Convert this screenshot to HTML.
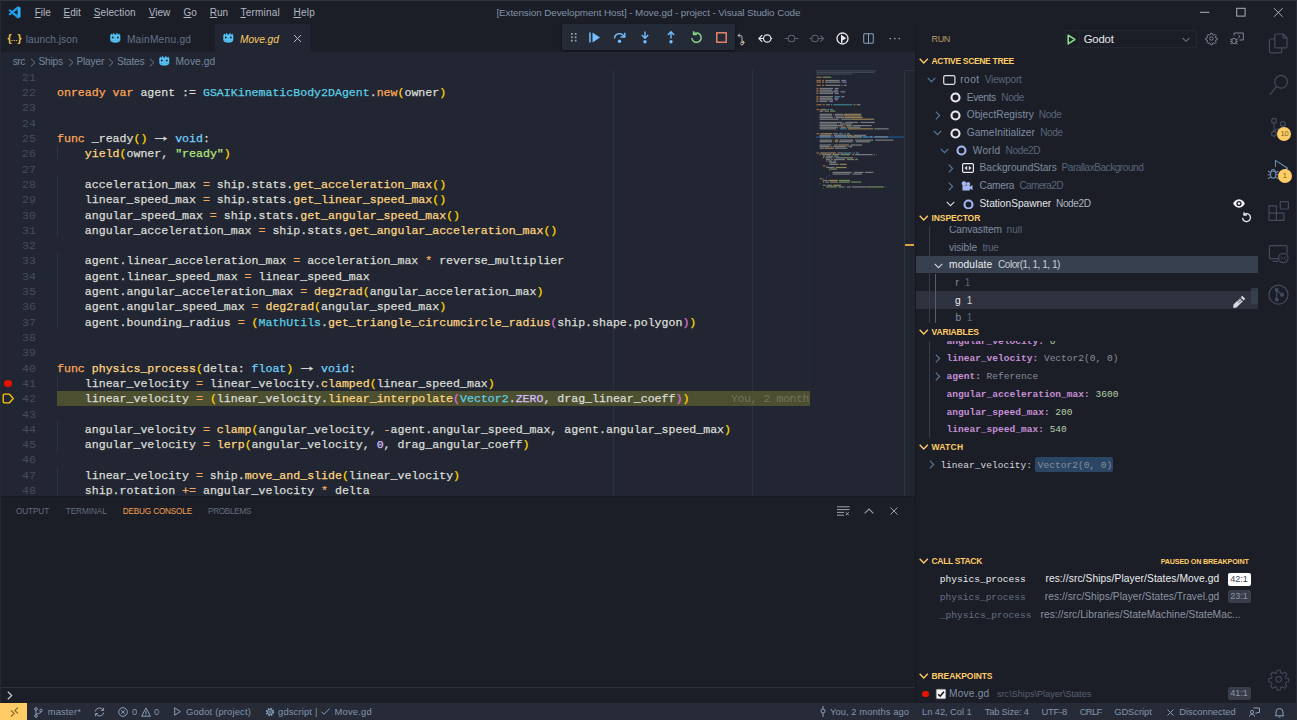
<!DOCTYPE html>
<html lang="en">
<head>
<meta charset="utf-8">
<title>[Extension Development Host] - Move.gd - project - Visual Studio Code</title>
<style>
html,body{margin:0;padding:0;background:#1b1e27;}
body{width:1297px;height:720px;position:relative;overflow:hidden;font-family:"Liberation Sans",sans-serif;font-size:10.5px;color:#cbccc6;-webkit-font-smoothing:antialiased}
.a{position:absolute;white-space:nowrap}
svg{position:absolute;overflow:visible}
#title{left:0;top:0;width:1297px;height:24px;background:#1b1e27}
#tabs{left:0;top:24px;width:915px;height:28px;background:#1b1e27}
#crumbs{left:0;top:52px;width:915px;height:18px;background:#212632}
#editor{left:0;top:70px;width:915px;height:426px;background:#212632;overflow:hidden}
#panel{left:0;top:496px;width:915px;height:207px;background:#1b1e27}
#side{left:915px;top:24px;width:343px;height:679px;background:#1b1e27;overflow:hidden}
#act{left:1258px;top:24px;width:39px;height:679px;background:#1b1e27}
#status{left:0;top:703px;width:1297px;height:17px;background:#262b37;color:#8395ad;font-size:10.5px;line-height:17px}
/* code */
.ln{margin-top:.7px;position:absolute;left:0;width:36px;text-align:right;color:#454c5e;font-family:"Liberation Mono",monospace;font-size:11.58px;height:15.31px;line-height:15.31px}
.cl{margin-top:.7px;position:absolute;left:57px;max-width:753px;overflow:hidden;white-space:pre;font-family:"Liberation Mono",monospace;font-size:11.58px;height:15.31px;line-height:15.31px;color:#dcddd7;-webkit-text-stroke:.25px currentColor}
.k{color:#ffa759}.f{color:#ffd580}.t{color:#5ccfe6}.v{color:#73d0ff}.s{color:#bae67e}.o{color:#f5a85c}.n{color:#d4bfff}
.b1{color:#ffd700}.b2{color:#da70d6}
.ar{display:inline-block;width:13.9px;text-align:center;transform:translateY(-1.5px) scale(1.7,1.25)}
.gd{left:57px;width:1px;background:#2c3241}
.rul{top:0;width:1px;height:426px;background:#2b3140}
.bl{letter-spacing:-.45px;color:#70735f;-webkit-text-stroke:0}
#mini rect{height:1.25px}#mini rect.hl{height:1.7px}#mini g{opacity:.5}
#ovr{border-left:1px solid #2d3340;border-top:1px solid #2d3340;box-sizing:border-box;background:#20252f}
.mn{top:0;line-height:25px;color:#b3b8c3;font-size:10px}
.mn u{text-decoration-thickness:.8px;text-underline-offset:.8px}
.tb{top:0;line-height:32.2px;font-size:10.2px;color:#65738a}
.cr{top:0;line-height:20.5px;font-size:10.2px;color:#76869d}
.cs{font-size:11px;transform:scaleX(.75);transform-origin:0 50%;color:#6a7386}
.hd{width:343px;height:17.700px;background:#1b1e27}
.ht{top:0;line-height:18.300px;font-size:8.500px;font-weight:bold;color:#ffcc66}
.tl{font-size:10.200px;line-height:18.500px;color:#7f8da2}
.td{font-size:10.100px;line-height:18.500px;color:#58657a}
.mono{font-family:"Liberation Mono",monospace;font-size:9.550px;line-height:19.700px}
.vn{color:#c58fd6;font-weight:bold}.wn{color:#d6d9df}
.vn span,.wn span{font-weight:normal}
.vval{color:#868e9c}.vnum{color:#b5cea8}
.bdg{font-size:9px;line-height:13px;height:13px;width:23px;text-align:center;border-radius:2px}
.pt{top:7px;line-height:16px;font-size:8.200px;color:#646d80}
#panel{border-top:1px solid #171a22;box-sizing:border-box}
.st{top:0;line-height:17.500px;font-size:9.400px;color:#8395ad}
.bb{width:14px;height:14px;border-radius:50%;background:#ffcc66;color:#7a6128;font-size:7.500px;line-height:14px;text-align:center;letter-spacing:-.3px}
</style>
</head>
<body>
<div id="title" class="a">
<svg style="left:8px;top:5.800px" width="13" height="12.600" viewBox="0 0 100 100"><path fill="#1f9cf0" d="M74 1v29L13 75 2 65z"/><path fill="#1f9cf0" d="M74 99V70L13 25 2 35z"/><path fill="#2eb0f6" d="M74 1l24 11.500v75L74 99V70l-2-1.500V31.500L74 30z"/><path fill="#1b1e27" d="M74 31v38L46 50z"/></svg>
<span class="a mn" style="left:34.7px"><u>F</u>ile</span>
<span class="a mn" style="left:63.6px"><u>E</u>dit</span>
<span class="a mn" style="left:93.7px;letter-spacing:.1px"><u>S</u>election</span>
<span class="a mn" style="left:148.8px"><u>V</u>iew</span>
<span class="a mn" style="left:183.5px"><u>G</u>o</span>
<span class="a mn" style="left:209.8px"><u>R</u>un</span>
<span class="a mn" style="left:240.5px;letter-spacing:.2px"><u>T</u>erminal</span>
<span class="a mn" style="left:293.5px;letter-spacing:.25px"><u>H</u>elp</span>
<span class="a" id="wt" style="left:496.4px;top:0;line-height:25px;color:#8292a8;font-size:9.900px;letter-spacing:-0.094px/*fit*/">[Extension Development Host] - Move.gd - project - Visual Studio Code</span>
<svg style="left:1198px;top:6px" width="90" height="13" viewBox="0 0 90 13" fill="none" stroke="#aab0bc" stroke-width="1"><path d="M2 6.3h9.4"/><rect x="38.7" y="2.3" width="8.4" height="7.8"/><path d="M76 2.2l8.6 8.6M84.6 2.2l-8.6 8.6"/></svg>
</div>
<div id="tabs" class="a">
<span class="a" style="left:7.5px;top:0;line-height:29px;font-size:10.5px;font-weight:bold;color:#f5c84c;letter-spacing:-.9px">{<span style="font-size:7px;position:relative;top:-1.5px;letter-spacing:-.2px">…</span>}</span>
<span class="a tb" style="left:25.8px;letter-spacing:0.023px/*fit*/">launch.json</span>
<svg style="left:109.3px;top:8.3px" width="12.600" height="11.500" viewBox="0 0 12 11"><path fill="#58c2f4" stroke="#141a22" stroke-width=".5" d="M.9 3.300 2.100 1.300l1.400 1 .2-1.700 1.500.3.200 1.200h1.200l.2-1.200 1.500-.3.200 1.700 1.400-1L11.100 3.300v4.200c0 2-2 3-5.100 3S.9 9.500.9 7.500z"/><circle cx="3.600" cy="5.300" r=".9" fill="#13202c"/><circle cx="8.400" cy="5.300" r=".9" fill="#13202c"/><circle cx="6" cy="6" r=".4" fill="#3a8fba"/><path d="M1.500 7.800c1.500.9 3 .3 4.500 1 1.500-.7 3-.1 4.500-1" fill="none" stroke="#3f9fcf" stroke-width=".5"/></svg>
<span class="a tb" style="left:126.9px;letter-spacing:0.233px/*fit*/">MainMenu.gd</span>
<div class="a" style="left:214.500px;top:0;width:95.500px;height:28px;background:#212632"></div>
<svg style="left:222.3px;top:8.3px" width="12.600" height="11.500" viewBox="0 0 12 11"><path fill="#58c2f4" stroke="#141a22" stroke-width=".5" d="M.9 3.300 2.100 1.300l1.400 1 .2-1.700 1.500.3.200 1.200h1.200l.2-1.200 1.500-.3.200 1.700 1.400-1L11.100 3.300v4.200c0 2-2 3-5.100 3S.9 9.500.9 7.500z"/><circle cx="3.600" cy="5.300" r=".9" fill="#13202c"/><circle cx="8.400" cy="5.300" r=".9" fill="#13202c"/><circle cx="6" cy="6" r=".4" fill="#3a8fba"/><path d="M1.500 7.800c1.500.9 3 .3 4.500 1 1.500-.7 3-.1 4.500-1" fill="none" stroke="#3f9fcf" stroke-width=".5"/></svg>
<span class="a tb" style="left:240px;color:#ffcc66;font-style:italic;letter-spacing:-0.025px/*fit*/">Move.gd</span>
<svg style="left:293px;top:10px" width="9" height="9" viewBox="0 0 9 9" stroke="#b3b8c3" stroke-width="1" fill="none"><path d="M1 1l7 7M8 1l-7 7"/></svg>
</div>
<div class="a" id="dbg" style="left:561.5px;top:24.3px;width:173.600px;height:25.700px;background:#252a37;box-shadow:0 1px 3px rgba(0,0,0,.45)">
<svg style="left:9.500px;top:8.500px" width="6" height="9" viewBox="0 0 6 9" fill="#9ba2af"><rect x="0" y="0" width="1.700" height="1.700"/><rect x="3.800" y="0" width="1.700" height="1.700"/><rect x="0" y="3.400" width="1.700" height="1.700"/><rect x="3.800" y="3.400" width="1.700" height="1.700"/><rect x="0" y="6.800" width="1.700" height="1.700"/><rect x="3.800" y="6.800" width="1.700" height="1.700"/></svg>
<svg style="left:26px;top:6.500px" width="13" height="13" viewBox="0 0 13 13"><rect x="1.200" y="1.500" width="1.500" height="10" fill="#75beff"/><path d="M4.500 1.500l7.500 5-7.500 5z" fill="#75beff"/></svg>
<svg style="left:51px;top:6.500px" width="14" height="13" viewBox="0 0 14 13" fill="none" stroke="#75beff" stroke-width="1.400"><path d="M1.500 7.500a5 5 0 0 1 9.600-1.800"/><path d="M11.800 1.800v4.200H7.600" stroke-linejoin="miter"/><circle cx="6.500" cy="10.300" r="1.700" fill="#75beff" stroke="none"/></svg>
<svg style="left:77.500px;top:6px" width="12" height="14" viewBox="0 0 12 14" fill="none" stroke="#75beff" stroke-width="1.400"><path d="M6 1.500v6.500M2.800 5 6 8.200 9.200 5"/><circle cx="6" cy="11.800" r="1.700" fill="#75beff" stroke="none"/></svg>
<svg style="left:103px;top:6px" width="12" height="14" viewBox="0 0 12 14" fill="none" stroke="#75beff" stroke-width="1.400"><path d="M6 8.500V2M2.800 5 6 1.800 9.200 5"/><circle cx="6" cy="11.800" r="1.700" fill="#75beff" stroke="none"/></svg>
<svg style="left:128.500px;top:6.500px" width="13" height="13" viewBox="0 0 13 13" fill="none" stroke="#89d185" stroke-width="1.500"><path d="M3.300 3.200A4.700 4.700 0 1 1 1.800 7"/><path d="M3.600 .3v3.300h3.300"/></svg>
<svg style="left:154.500px;top:7.500px" width="11" height="11" viewBox="0 0 11 11" fill="none" stroke="#f48771" stroke-width="1.400"><rect x=".8" y=".8" width="9.400" height="9.400"/></svg>
</div>
<svg style="left:735px;top:31.500px" width="12" height="14" viewBox="0 0 12 14" fill="none" stroke="#aeb5c2" stroke-width="1"><path d="M3 3.500h2.500q1.500 0 1.500 1.500v5M5 1.500l-2 2 2 2"/><circle cx="7" cy="11.500" r="1.400"/><path d="M9 10.500H6.500M7.500 8.500l2 2-2 2" stroke="#c9b27a"/></svg>
<svg style="left:758px;top:32.800px" width="15" height="11" viewBox="0 0 15 11" fill="none" stroke="#e2e5ea" stroke-width="1.200"><circle cx="9.200" cy="5.500" r="3.700"/><path d="M5.500 5.500H1M4.200 2.200L.9 5.500l3.300 3.300M12.900 5.500h1.300"/></svg>
<svg style="left:783.500px;top:32.800px" width="15" height="11" viewBox="0 0 15 11" fill="none" stroke="#586072" stroke-width="1.100"><circle cx="7.500" cy="5.500" r="3.300"/><path d="M4.200 5.500H.5M10.800 5.500h3.700"/></svg>
<svg style="left:809px;top:32.800px" width="15" height="11" viewBox="0 0 15 11" fill="none" stroke="#586072" stroke-width="1.100"><circle cx="6" cy="5.500" r="3.300"/><path d="M9.300 5.500h4.900M11.500 2.500l3 3-3 3M2.700 5.500H.5"/></svg>
<svg style="left:835.500px;top:32px" width="13" height="13" viewBox="0 0 13 13"><circle cx="6.500" cy="6.500" r="5.500" fill="none" stroke="#e6e8ec" stroke-width="1.300"/><path d="M5 2.200v8.600h1.500V8.600L10.300 6.300 6 3.200z" fill="#e6e8ec"/></svg>
<svg style="left:863px;top:33px" width="11" height="11" viewBox="0 0 12 12" fill="none" stroke="#8aa3c4" stroke-width="1.100"><rect x=".8" y=".8" width="10.400" height="10.400" rx="1"/><path d="M6 .8v10.400"/></svg>
<svg style="left:888.500px;top:37.300px" width="12" height="3" viewBox="0 0 12 3" fill="#8aa3c4"><circle cx="1.300" cy="1.500" r=".85"/><circle cx="5.800" cy="1.500" r=".85"/><circle cx="10.300" cy="1.500" r=".85"/></svg>
<div id="crumbs" class="a">
<span class="a cr" style="left:12.7px;letter-spacing:-0.465px/*fit*/">src</span><svg style="left:29.5px;top:5.5px" width="6" height="9" viewBox="0 0 6 9" fill="none" stroke="#6f788a" stroke-width="1"><path d="M1 .8l4 3.700-4 3.700"/></svg>
<span class="a cr" style="left:38.4px;letter-spacing:-0.197px/*fit*/">Ships</span><svg style="left:67.5px;top:5.5px" width="6" height="9" viewBox="0 0 6 9" fill="none" stroke="#6f788a" stroke-width="1"><path d="M1 .8l4 3.700-4 3.700"/></svg>
<span class="a cr" style="left:76.4px;letter-spacing:-0.182px/*fit*/">Player</span><svg style="left:108.3px;top:5.5px" width="6" height="9" viewBox="0 0 6 9" fill="none" stroke="#6f788a" stroke-width="1"><path d="M1 .8l4 3.700-4 3.700"/></svg>
<span class="a cr" style="left:117px;letter-spacing:-0.282px/*fit*/">States</span><svg style="left:148.6px;top:5.5px" width="6" height="9" viewBox="0 0 6 9" fill="none" stroke="#6f788a" stroke-width="1"><path d="M1 .8l4 3.700-4 3.700"/></svg>
<svg style="left:158.3px;top:3.3px" width="12.600" height="11.500" viewBox="0 0 12 11"><path fill="#58c2f4" stroke="#141a22" stroke-width=".5" d="M.9 3.300 2.100 1.300l1.400 1 .2-1.700 1.500.3.200 1.200h1.200l.2-1.200 1.500-.3.200 1.700 1.400-1L11.100 3.300v4.200c0 2-2 3-5.100 3S.9 9.500.9 7.500z"/><circle cx="3.600" cy="5.300" r=".9" fill="#13202c"/><circle cx="8.400" cy="5.300" r=".9" fill="#13202c"/><circle cx="6" cy="6" r=".4" fill="#3a8fba"/><path d="M1.500 7.800c1.500.9 3 .3 4.500 1 1.500-.7 3-.1 4.500-1" fill="none" stroke="#3f9fcf" stroke-width=".5"/></svg>
<span class="a cr" style="left:175.500px;letter-spacing:0.117px/*fit*/">Move.gd</span>
</div>
<div id="editor" class="a">
<div class="a rul" style="left:613px"></div><div class="a rul" style="left:752px"></div>
<div class="a" id="hl42" style="left:57px;top:321.16px;width:753px;height:15.3px;background:#4c4f30"></div>
<div class="a gd" style="top:75.60px;height:15.31px"></div><div class="a gd" style="top:106.22px;height:61.24px"></div><div class="a gd" style="top:182.77px;height:76.55px"></div><div class="a gd" style="top:305.25px;height:15.91px"></div><div class="a gd" style="top:351.18px;height:30.62px"></div><div class="a gd" style="top:397.11px;height:30.62px"></div>
<div class="ln" style="top:-0.95px">21</div>
<div class="ln" style="top:14.36px">22</div>
<div class="cl" style="top:14.36px"><span class="k">onready</span> <span class="k">var</span> agent := <span class="t">GSAIKinematicBody2DAgent</span>.<span class="k">new</span><span class="b1">(</span>owner<span class="b1">)</span></div>
<div class="ln" style="top:29.67px">23</div>
<div class="ln" style="top:44.98px">24</div>
<div class="ln" style="top:60.29px">25</div>
<div class="cl" style="top:60.29px"><span class="k">func</span> _ready<span class="b1">()</span> <span class="ar">→</span> <span class="v">void</span>:</div>
<div class="ln" style="top:75.60px">26</div>
<div class="cl" style="top:75.60px">    <span class="f">yield</span><span class="b1">(</span>owner, <span class="s">"ready"</span><span class="b1">)</span></div>
<div class="ln" style="top:90.91px">27</div>
<div class="ln" style="top:106.22px">28</div>
<div class="cl" style="top:106.22px">    acceleration_max <span class="o">=</span> ship.stats.<span class="f">get_acceleration_max</span><span class="b1">()</span></div>
<div class="ln" style="top:121.53px">29</div>
<div class="cl" style="top:121.53px">    linear_speed_max <span class="o">=</span> ship.stats.<span class="f">get_linear_speed_max</span><span class="b1">()</span></div>
<div class="ln" style="top:136.84px">30</div>
<div class="cl" style="top:136.84px">    angular_speed_max <span class="o">=</span> ship.stats.<span class="f">get_angular_speed_max</span><span class="b1">()</span></div>
<div class="ln" style="top:152.15px">31</div>
<div class="cl" style="top:152.15px">    angular_acceleration_max <span class="o">=</span> ship.stats.<span class="f">get_angular_acceleration_max</span><span class="b1">()</span></div>
<div class="ln" style="top:167.46px">32</div>
<div class="ln" style="top:182.77px">33</div>
<div class="cl" style="top:182.77px">    agent.linear_acceleration_max <span class="o">=</span> acceleration_max <span class="o">*</span> reverse_multiplier</div>
<div class="ln" style="top:198.08px">34</div>
<div class="cl" style="top:198.08px">    agent.linear_speed_max <span class="o">=</span> linear_speed_max</div>
<div class="ln" style="top:213.39px">35</div>
<div class="cl" style="top:213.39px">    agent.angular_acceleration_max <span class="o">=</span> <span class="f">deg2rad</span><span class="b1">(</span>angular_acceleration_max<span class="b1">)</span></div>
<div class="ln" style="top:228.70px">36</div>
<div class="cl" style="top:228.70px">    agent.angular_speed_max <span class="o">=</span> <span class="f">deg2rad</span><span class="b1">(</span>angular_speed_max<span class="b1">)</span></div>
<div class="ln" style="top:244.01px">37</div>
<div class="cl" style="top:244.01px">    agent.bounding_radius <span class="o">=</span> <span class="b1">(</span><span class="t">MathUtils</span>.<span class="f">get_triangle_circumcircle_radius</span><span class="b2">(</span>ship.shape.polygon<span class="b2">)</span><span class="b1">)</span></div>
<div class="ln" style="top:259.32px">38</div>
<div class="ln" style="top:274.63px">39</div>
<div class="ln" style="top:289.94px">40</div>
<div class="cl" style="top:289.94px"><span class="k">func</span> <span class="f">physics_process</span><span class="b1">(</span>delta: <span class="v">float</span><span class="b1">)</span> <span class="ar">→</span> <span class="v">void</span>:</div>
<div class="ln" style="top:305.25px">41</div>
<div class="cl" style="top:305.25px">    linear_velocity <span class="o">=</span> linear_velocity.<span class="f">clamped</span><span class="b1">(</span>linear_speed_max<span class="b1">)</span></div>
<div class="ln" style="top:320.56px">42</div>
<div class="cl" style="top:320.56px">    linear_velocity <span class="o">=</span> <span class="b1">(</span>linear_velocity.<span class="f">linear_interpolate</span><span class="b2">(</span><span class="t">Vector2</span>.<span class="n">ZERO</span>, drag_linear_coeff<span class="b2">)</span><span class="b1">)</span>      <span class="bl">You, 2 months ago • Fix player movement</span></div>
<div class="ln" style="top:335.87px">43</div>
<div class="ln" style="top:351.18px">44</div>
<div class="cl" style="top:351.18px">    angular_velocity <span class="o">=</span> <span class="f">clamp</span><span class="b1">(</span>angular_velocity, <span class="o">-</span>agent.angular_speed_max, agent.angular_speed_max<span class="b1">)</span></div>
<div class="ln" style="top:366.49px">45</div>
<div class="cl" style="top:366.49px">    angular_velocity <span class="o">=</span> <span class="f">lerp</span><span class="b1">(</span>angular_velocity, <span class="n">0</span>, drag_angular_coeff<span class="b1">)</span></div>
<div class="ln" style="top:381.80px">46</div>
<div class="ln" style="top:397.11px">47</div>
<div class="cl" style="top:397.11px">    linear_velocity <span class="o">=</span> ship.<span class="f">move_and_slide</span><span class="b1">(</span>linear_velocity<span class="b1">)</span></div>
<div class="ln" style="top:412.42px">48</div>
<div class="cl" style="top:412.42px">    ship.rotation <span class="o">+=</span> angular_velocity <span class="o">*</span> delta</div>

<div class="a" style="left:4.2px;top:310.00px;width:7.4px;height:7.4px;border-radius:50%;background:#e51400"></div>
<svg style="left:2px;top:323.31px" width="13" height="11" viewBox="0 0 13 11"><path d="M2.2 1.2h5.2l3.9 4.3-3.9 4.3H2.2a1 1 0 0 1-1-1V2.2a1 1 0 0 1 1-1z" fill="none" stroke="#ffcc00" stroke-width="1.3" stroke-linejoin="round"/></svg>
<div class="a" id="mmshadow" style="left:809px;top:0;width:1px;height:320px;background:#262b38"></div>
<svg id="mini" style="left:816px;top:0" width="88" height="130" viewBox="0 0 88 130">
<rect class="hl" x="0" y="66.19" width="88" fill="#1f4a73"/>
<g fill="#5c6773"><rect x="0.4" y="0.2" width="59.3"/><rect x="0.4" y="1.8" width="57.7"/><rect x="0.4" y="3.4" width="35.9"/></g>
<g fill="#ffa759"><rect x="0.4" y="6.6" width="5.3"/><rect x="0.4" y="9.9" width="4.5"/><rect x="6.0" y="9.9" width="2.1"/><rect x="0.4" y="11.5" width="4.5"/><rect x="6.0" y="11.5" width="2.1"/><rect x="0.4" y="14.7" width="4.5"/><rect x="6.0" y="14.7" width="2.1"/><rect x="0.4" y="17.9" width="2.1"/><rect x="0.4" y="19.5" width="2.1"/><rect x="0.4" y="21.2" width="2.1"/><rect x="0.4" y="22.8" width="2.1"/><rect x="0.4" y="26.0" width="2.1"/><rect x="0.4" y="27.6" width="2.1"/><rect x="0.4" y="29.2" width="2.1"/><rect x="0.4" y="30.8" width="2.1"/><rect x="0.4" y="34.1" width="5.3"/><rect x="6.8" y="34.1" width="2.1"/><rect x="37.5" y="34.1" width="2.1"/><rect x="0.4" y="38.9" width="2.9"/><rect x="0.4" y="63.1" width="2.9"/><rect x="0.4" y="82.4" width="2.9"/><rect x="3.6" y="84.0" width="1.3"/><rect x="35.9" y="84.0" width="2.1"/><rect x="6.8" y="85.6" width="2.1"/><rect x="6.8" y="87.2" width="1.3"/><rect x="10.1" y="90.5" width="1.3"/><rect x="6.8" y="95.3" width="2.9"/><rect x="3.6" y="108.2" width="2.9"/><rect x="6.8" y="111.4" width="1.3"/></g>
<g fill="#bae67e"><rect x="6.8" y="6.6" width="8.5"/><rect x="14.1" y="40.5" width="5.3"/><rect x="24.6" y="84.0" width="9.3"/><rect x="31.0" y="88.9" width="6.9"/><rect x="13.3" y="98.5" width="7.7"/><rect x="23.0" y="109.8" width="10.9"/><rect x="23.0" y="111.4" width="10.9"/><rect x="35.1" y="111.4" width="6.9"/><rect x="42.3" y="111.4" width="2.9"/><rect x="10.1" y="116.3" width="10.9"/><rect x="50.4" y="116.3" width="17.4"/></g>
<g fill="#cbccc6"><rect x="9.3" y="9.9" width="14.2"/><rect x="9.3" y="11.5" width="15.0"/><rect x="9.3" y="14.7" width="15.0"/><rect x="3.6" y="17.9" width="13.4"/><rect x="3.6" y="19.5" width="12.5"/><rect x="3.6" y="21.2" width="19.0"/><rect x="3.6" y="22.8" width="13.4"/><rect x="3.6" y="26.0" width="13.4"/><rect x="3.6" y="27.6" width="12.5"/><rect x="3.6" y="29.2" width="13.4"/><rect x="3.6" y="30.8" width="7.7"/><rect x="10.1" y="34.1" width="3.7"/><rect x="14.9" y="34.1" width="1.3"/><rect x="40.7" y="34.1" width="3.7"/><rect x="4.4" y="38.9" width="6.1"/><rect x="11.7" y="38.9" width="1.3"/><rect x="8.5" y="40.5" width="4.5"/><rect x="3.6" y="43.7" width="12.5"/><rect x="18.9" y="43.7" width="8.5"/><rect x="3.6" y="45.3" width="12.5"/><rect x="18.9" y="45.3" width="8.5"/><rect x="3.6" y="46.9" width="13.4"/><rect x="19.7" y="46.9" width="8.5"/><rect x="3.6" y="48.6" width="19.0"/><rect x="25.4" y="48.6" width="8.5"/><rect x="3.6" y="51.8" width="23.0"/><rect x="29.4" y="51.8" width="12.5"/><rect x="44.7" y="51.8" width="14.2"/><rect x="3.6" y="53.4" width="17.4"/><rect x="23.8" y="53.4" width="12.5"/><rect x="3.6" y="55.0" width="23.8"/><rect x="36.7" y="55.0" width="19.0"/><rect x="3.6" y="56.6" width="18.2"/><rect x="31.0" y="56.6" width="13.4"/><rect x="3.6" y="58.2" width="16.6"/><rect x="58.4" y="58.2" width="14.2"/><rect x="17.3" y="63.1" width="4.5"/><rect x="28.6" y="63.1" width="1.3"/><rect x="3.6" y="64.7" width="11.7"/><rect x="18.1" y="64.7" width="12.5"/><rect x="37.5" y="64.7" width="12.5"/><rect x="3.6" y="66.3" width="11.7"/><rect x="18.9" y="66.3" width="12.5"/><rect x="58.4" y="66.3" width="13.4"/><rect x="3.6" y="69.5" width="12.5"/><rect x="23.8" y="69.5" width="13.4"/><rect x="39.1" y="69.5" width="18.2"/><rect x="59.2" y="69.5" width="18.2"/><rect x="3.6" y="71.1" width="12.5"/><rect x="23.0" y="71.1" width="13.4"/><rect x="39.9" y="71.1" width="14.2"/><rect x="3.6" y="74.4" width="11.7"/><rect x="18.1" y="74.4" width="3.7"/><rect x="34.3" y="74.4" width="11.7"/><rect x="3.6" y="76.0" width="10.1"/><rect x="17.3" y="76.0" width="12.5"/><rect x="32.6" y="76.0" width="3.7"/><rect x="3.6" y="77.6" width="4.5"/><rect x="18.9" y="77.6" width="12.5"/><rect x="21.4" y="82.4" width="6.1"/><rect x="37.5" y="82.4" width="1.3"/><rect x="6.0" y="84.0" width="9.3"/><rect x="39.1" y="84.0" width="17.4"/><rect x="10.1" y="85.6" width="6.9"/><rect x="9.3" y="87.2" width="6.9"/><rect x="19.7" y="87.2" width="17.4"/><rect x="10.1" y="88.9" width="3.7"/><rect x="18.1" y="88.9" width="10.9"/><rect x="39.1" y="88.9" width="2.9"/><rect x="12.5" y="90.5" width="3.7"/><rect x="17.3" y="90.5" width="2.9"/><rect x="13.3" y="92.1" width="6.9"/><rect x="13.3" y="93.7" width="9.3"/><rect x="10.9" y="95.3" width="0.5"/><rect x="10.1" y="96.9" width="8.5"/><rect x="13.3" y="100.1" width="0.5"/><rect x="16.5" y="101.8" width="19.0"/><rect x="38.3" y="101.8" width="9.3"/><rect x="48.8" y="101.8" width="8.5"/><rect x="16.5" y="103.4" width="17.4"/><rect x="36.7" y="103.4" width="9.3"/><rect x="13.3" y="105.0" width="0.5"/><rect x="10.1" y="106.6" width="0.5"/><rect x="6.8" y="108.2" width="0.5"/><rect x="6.8" y="109.8" width="4.5"/><rect x="9.3" y="111.4" width="3.7"/><rect x="3.6" y="113.0" width="0.5"/><rect x="6.8" y="114.7" width="2.9"/><rect x="10.9" y="114.7" width="5.3"/><rect x="22.2" y="116.3" width="6.1"/><rect x="31.0" y="116.3" width="3.7"/><rect x="35.9" y="116.3" width="14.2"/><rect x="69.7" y="116.3" width="0.5"/><rect x="6.8" y="117.9" width="0.5"/></g>
<g fill="#d4bfff"><rect x="25.4" y="9.9" width="4.5"/><rect x="26.2" y="11.5" width="4.5"/><rect x="27.8" y="14.7" width="2.9"/><rect x="18.9" y="17.9" width="3.7"/><rect x="18.1" y="19.5" width="3.7"/><rect x="24.6" y="21.2" width="4.5"/><rect x="18.9" y="22.8" width="3.7"/><rect x="25.4" y="26.0" width="2.9"/><rect x="18.1" y="27.6" width="4.5"/><rect x="18.9" y="29.2" width="2.9"/><rect x="13.3" y="30.8" width="3.7"/><rect x="53.6" y="66.3" width="2.9"/><rect x="37.5" y="71.1" width="0.5"/><rect x="60.0" y="84.0" width="0.5"/><rect x="39.9" y="87.2" width="0.5"/></g>
<g fill="#f29e74"><rect x="25.4" y="14.7" width="1.3"/><rect x="17.3" y="43.7" width="0.5"/><rect x="17.3" y="45.3" width="0.5"/><rect x="18.1" y="46.9" width="0.5"/><rect x="23.8" y="48.6" width="0.5"/><rect x="27.8" y="51.8" width="0.5"/><rect x="43.1" y="51.8" width="0.5"/><rect x="22.2" y="53.4" width="0.5"/><rect x="28.6" y="55.0" width="0.5"/><rect x="23.0" y="56.6" width="0.5"/><rect x="21.4" y="58.2" width="0.5"/><rect x="16.5" y="64.7" width="0.5"/><rect x="16.5" y="66.3" width="0.5"/><rect x="17.3" y="69.5" width="0.5"/><rect x="17.3" y="71.1" width="0.5"/><rect x="16.5" y="74.4" width="0.5"/><rect x="14.9" y="76.0" width="1.3"/><rect x="31.0" y="76.0" width="0.5"/><rect x="57.6" y="84.0" width="1.3"/><rect x="17.3" y="87.2" width="1.3"/><rect x="38.3" y="87.2" width="0.5"/><rect x="14.9" y="88.9" width="2.1"/><rect x="36.7" y="101.8" width="0.5"/><rect x="35.1" y="103.4" width="0.5"/><rect x="29.4" y="116.3" width="0.5"/></g>
<g fill="#5ccfe6"><rect x="18.9" y="26.0" width="5.3"/><rect x="17.3" y="34.1" width="19.0"/><rect x="23.8" y="58.2" width="6.9"/><rect x="47.1" y="66.3" width="5.3"/></g>
<g fill="#73d0ff"><rect x="14.1" y="38.9" width="2.9"/><rect x="23.0" y="63.1" width="3.7"/><rect x="31.0" y="63.1" width="2.9"/><rect x="27.8" y="82.4" width="7.7"/><rect x="39.9" y="82.4" width="2.9"/><rect x="18.1" y="85.6" width="4.5"/></g>
<g fill="#ffd580"><rect x="3.6" y="40.5" width="3.7"/><rect x="27.8" y="43.7" width="17.4"/><rect x="27.8" y="45.3" width="17.4"/><rect x="28.6" y="46.9" width="18.2"/><rect x="34.3" y="48.6" width="23.8"/><rect x="30.2" y="55.0" width="5.3"/><rect x="24.6" y="56.6" width="5.3"/><rect x="31.8" y="58.2" width="25.4"/><rect x="4.4" y="63.1" width="11.7"/><rect x="31.0" y="64.7" width="5.3"/><rect x="31.8" y="66.3" width="14.2"/><rect x="18.9" y="69.5" width="3.7"/><rect x="18.9" y="71.1" width="2.9"/><rect x="22.2" y="74.4" width="10.9"/><rect x="8.5" y="77.6" width="9.3"/><rect x="4.4" y="82.4" width="15.8"/><rect x="16.5" y="84.0" width="6.9"/><rect x="23.8" y="93.7" width="6.9"/><rect x="19.7" y="96.9" width="10.9"/><rect x="12.5" y="109.8" width="9.3"/><rect x="14.1" y="111.4" width="7.7"/><rect x="17.3" y="114.7" width="7.7"/></g>
</svg>

<div class="a" id="ovr" style="left:904px;top:0;width:11px;height:426px"></div>
<div class="a" style="left:905px;top:174px;width:9px;height:2px;background:#d9a441"></div>
</div>
<div id="panel" class="a">
<span class="a pt" style="left:16px;letter-spacing:-0.095px/*fit*/">OUTPUT</span>
<span class="a pt" style="left:65.700px;letter-spacing:-0.038px/*fit*/">TERMINAL</span>
<span class="a pt" style="left:122.800px;color:#f5a04c;letter-spacing:-0.172px/*fit*/">DEBUG CONSOLE</span>
<span class="a pt" style="left:208px;letter-spacing:-0.300px/*fit*/">PROBLEMS</span>
<svg style="left:836.500px;top:9px" width="13" height="10" viewBox="0 0 13 10" fill="none" stroke="#9aa1ae" stroke-width="1"><path d="M0 .8h12.500M0 3.600h12.500M0 6.400h7M0 9.200h7M8.800 6.200l3 3M11.800 6.200l-3 3"/></svg>
<svg style="left:863.500px;top:11px" width="10" height="6" viewBox="0 0 10 6" fill="none" stroke="#9aa1ae" stroke-width="1.100"><path d="M.6 5.400l4.400-4.400 4.400 4.400"/></svg>
<svg style="left:890px;top:10px" width="8" height="8" viewBox="0 0 8 8" fill="none" stroke="#9aa1ae" stroke-width="1"><path d="M.5 .5l7 7M7.500 .5l-7 7"/></svg>
<div class="a" style="left:0;top:190px;width:915px;height:1px;background:#2c313d"></div>
<svg style="left:6.500px;top:193.500px" width="6" height="9" viewBox="0 0 6 9" fill="none" stroke="#c5cad3" stroke-width="1.200"><path d="M.8 .7l3.900 3.800L.8 8.300"/></svg>
</div>
<div id="side" class="a">
<span class="a" style="left:16.500px;top:9px;font-size:9px;line-height:12px;color:#b99d62;letter-spacing:-0.367px/*fit*/">RUN</span>
<div class="a" style="left:150.300px;top:6px;width:132px;height:17.500px;box-sizing:border-box;border:1px solid #222733;background:#1b1e27"></div><div class="a" style="left:164px;top:7px;width:1px;height:15.500px;background:#222733"></div>
<svg style="left:152px;top:9.500px" width="9" height="11" viewBox="0 0 9 11" fill="none" stroke="#8bdc88" stroke-width="1.600" stroke-linejoin="round"><path d="M1.200 1.200l6.600 4.300-6.600 4.300z"/></svg>
<span class="a" style="left:168.700px;top:7px;font-size:11.300px;line-height:16px;color:#e4e6ea;letter-spacing:-0.156px/*fit*/">Godot</span>
<svg style="left:267px;top:12.5px" width="8" height="6" viewBox="0 0 9 6" fill="none" stroke="#8f97a6" stroke-width="1.100"><path d="M.7 .8l3.800 3.800L8.300 .8"/></svg>
<svg style="left:290px;top:8.200px" width="13" height="13" viewBox="-13 -13 26 26" fill="none" stroke="#7d8698" stroke-width="1.900" stroke-linejoin="round"><circle cx="0" cy="0" r="3.400"/><path d="M-1.700-10.500h3.400l.6 3 2 .9 2.600-1.700 2.400 2.400-1.700 2.600.9 2 3 .6v3.400l-3 .6-.9 2 1.700 2.600-2.400 2.400-2.600-1.700-2 .9-.6 3h-3.400l-.6-3-2-.9-2.600 1.700-2.400-2.400 1.700-2.600-.9-2-3-.6v-3.400l3-.6.9-2-1.700-2.600 2.400-2.400 2.600 1.700 2-.9z"/></svg>
<svg style="left:315px;top:8px" width="14" height="13" viewBox="0 0 14 13" fill="none" stroke="#7d8698" stroke-width="1"><path d="M4 3.500V1h9.300v7H9.500"/><path d="M8.300 3l1.700 1.500L8.300 6"/><ellipse cx="4" cy="9" rx="2.200" ry="2.800"/><path d="M.3 7l1.700.8M.2 9.500h1.600M.5 12l1.500-1M7.700 7l-1.700.8M7.800 9.500H6.200M7.500 12L6 11"/></svg>
<svg style="left:12px;top:53.0px" width="9" height="6" viewBox="0 0 9 6" fill="none" stroke="#5b7c9e" stroke-width="1.100"><path d="M.7 .8l3.800 3.800L8.300 .8"/></svg>
<svg style="left:27.9px;top:50.6px" width="13" height="10" viewBox="0 0 13 10" fill="none" stroke="#dfe2e8" stroke-width="1.200"><rect x=".7" y=".7" width="11.200" height="8.600" rx="1.500"/></svg>
<span class="a tl" style="left:45.3px;top:46.8px;letter-spacing:0.434px/*fit*/">root</span>
<span class="a td" style="left:69.8px;top:46.8px;letter-spacing:-0.299px/*fit*/">Viewport</span>
<svg style="left:34.6px;top:68.1px" width="11" height="11" viewBox="0 0 11 11" fill="none" stroke="#e8eaee" stroke-width="2.100"><circle cx="5.500" cy="5.500" r="4"/></svg>
<span class="a tl" style="left:51.7px;top:64.5px;letter-spacing:-0.343px/*fit*/">Events</span>
<span class="a td" style="left:86.3px;top:64.5px;letter-spacing:-0.360px/*fit*/">Node</span>
<svg style="left:19.8px;top:86.6px" width="6" height="9" viewBox="0 0 6 9" fill="none" stroke="#5b7c9e" stroke-width="1.100"><path d="M.8 .7l3.800 3.800L.8 8.300"/></svg>
<svg style="left:34.6px;top:85.9px" width="11" height="11" viewBox="0 0 11 11" fill="none" stroke="#e8eaee" stroke-width="2.100"><circle cx="5.500" cy="5.500" r="4"/></svg>
<span class="a tl" style="left:51.7px;top:82.2px;letter-spacing:0.021px/*fit*/">ObjectRegistry</span>
<span class="a td" style="left:123.7px;top:82.2px;letter-spacing:-0.310px/*fit*/">Node</span>
<svg style="left:18.2px;top:106.2px" width="9" height="6" viewBox="0 0 9 6" fill="none" stroke="#5b7c9e" stroke-width="1.100"><path d="M.7 .8l3.800 3.800L8.300 .8"/></svg>
<svg style="left:34.6px;top:103.6px" width="11" height="11" viewBox="0 0 11 11" fill="none" stroke="#e8eaee" stroke-width="2.100"><circle cx="5.500" cy="5.500" r="4"/></svg>
<span class="a tl" style="left:51.7px;top:99.9px;letter-spacing:0.023px/*fit*/">GameInitializer</span>
<span class="a td" style="left:125.2px;top:99.9px;letter-spacing:-0.385px/*fit*/">Node</span>
<svg style="left:24.8px;top:123.9px" width="9" height="6" viewBox="0 0 9 6" fill="none" stroke="#5b7c9e" stroke-width="1.100"><path d="M.7 .8l3.800 3.800L8.300 .8"/></svg>
<svg style="left:41.3px;top:121.3px" width="11" height="11" viewBox="0 0 11 11" fill="none" stroke="#a5b7f3" stroke-width="2.100"><circle cx="5.500" cy="5.500" r="4"/></svg>
<span class="a tl" style="left:57.8px;top:117.7px;letter-spacing:0.236px/*fit*/">World</span>
<span class="a td" style="left:90.6px;top:117.7px;letter-spacing:-0.408px/*fit*/">Node2D</span>
<svg style="left:33.2px;top:139.8px" width="6" height="9" viewBox="0 0 6 9" fill="none" stroke="#5b7c9e" stroke-width="1.100"><path d="M.8 .7l3.800 3.800L.8 8.300"/></svg>
<svg style="left:47.1px;top:139.2px" width="12" height="10" viewBox="0 0 12 10"><rect x=".6" y=".6" width="10.800" height="8.800" rx="1.200" fill="none" stroke="#e8eaee" stroke-width="1.200"/><path d="M5.200 2.800v4.400L2.500 5zM6.800 2.800v4.400L9.500 5z" fill="#e8eaee"/></svg>
<span class="a tl" style="left:64.6px;top:135.4px;letter-spacing:-0.070px/*fit*/">BackgroundStars</span>
<span class="a td" style="left:146.6px;top:135.4px;letter-spacing:-0.480px/*fit*/">ParallaxBackground</span>
<svg style="left:33.2px;top:157.5px" width="6" height="9" viewBox="0 0 6 9" fill="none" stroke="#5b7c9e" stroke-width="1.100"><path d="M.8 .7l3.800 3.800L.8 8.300"/></svg>
<svg style="left:46.0px;top:157.0px" width="12" height="10" viewBox="0 0 12 10" fill="#a5b7f3"><circle cx="3" cy="2.600" r="2.300"/><circle cx="7.200" cy="2.900" r="2"/><path d="M1.500 4.500h7.300v1.200L11.500 4v5L8.800 7.700V9.500H1.500z"/></svg>
<span class="a tl" style="left:64.6px;top:153.1px;letter-spacing:-0.272px/*fit*/">Camera</span>
<span class="a td" style="left:104.4px;top:153.1px;letter-spacing:-0.677px/*fit*/">Camera2D</span>
<svg style="left:30.9px;top:177.1px" width="9" height="6" viewBox="0 0 9 6" fill="none" stroke="#d5d8de" stroke-width="1.100"><path d="M.7 .8l3.800 3.800L8.300 .8"/></svg>
<svg style="left:47.5px;top:174.5px" width="11" height="11" viewBox="0 0 11 11" fill="none" stroke="#a5b7f3" stroke-width="2.100"><circle cx="5.500" cy="5.500" r="4"/></svg>
<span class="a tl" style="left:64.6px;top:170.9px;color:#e4e6ea;letter-spacing:-0.024px/*fit*/">StationSpawner</span>
<span class="a td" style="left:141px;top:170.9px;color:#aeb4c0;letter-spacing:-0.391px/*fit*/">Node2D</span>
<svg style="left:317.8px;top:175.2px" width="12" height="9" viewBox="0 0 12 9"><path d="M6 .3C3 .3 .9 2.700 .2 4.500 .9 6.300 3 8.700 6 8.700s5.100-2.400 5.800-4.200C11.100 2.700 9 .3 6 .3z" fill="#f0f1f4"/><circle cx="6" cy="4.500" r="2.600" fill="#1b1e27"/><circle cx="6" cy="4.500" r="1.200" fill="#f0f1f4"/></svg>
<div class="a" style="left:0;top:231.9px;width:343px;height:17.600px;background:#36404f"></div>
<div class="a" style="left:0;top:267.3px;width:343px;height:17.600px;background:#2e323e"></div>
<div class="a" style="left:14px;top:202px;width:1px;height:98px;background:#363c4a"></div>
<div class="a" style="left:20px;top:249.5px;width:1px;height:50px;background:#5a5e69"></div>
<span class="a tl" style="left:34px;top:197.0px;letter-spacing:-0.146px/*fit*/">CanvasItem</span>
<span class="a td" style="left:91.5px;top:197.0px;letter-spacing:0.045px/*fit*/">null</span>
<span class="a tl" style="left:34px;top:214.6px;letter-spacing:-0.030px/*fit*/">visible</span>
<span class="a td" style="left:67.6px;top:214.6px;letter-spacing:-0.352px/*fit*/">true</span>
<svg style="left:18.5px;top:238.5px" width="9" height="6" viewBox="0 0 9 6" fill="none" stroke="#d5d8de" stroke-width="1.100"><path d="M.7 .8l3.800 3.800L8.300 .8"/></svg>
<span class="a tl" style="left:34px;top:232.2px;color:#eceef1;letter-spacing:0.185px/*fit*/">modulate</span>
<span class="a td" style="left:83px;top:232.2px;color:#c9cdd5;letter-spacing:-0.478px/*fit*/">Color(1, 1, 1, 1)</span>
<span class="a tl" style="left:40.5px;top:249.9px">r</span>
<span class="a td" style="left:49.7px;top:249.9px">1</span>
<span class="a tl" style="left:40.1px;top:267.8px;color:#eceef1">g</span>
<span class="a td" style="left:51.7px;top:267.8px;color:#c9cdd5">1</span>
<svg style="left:317.5px;top:270.6px" width="13" height="13" viewBox="0 0 13 13"><path d="M9.200 .8l3 3-1.600 1.600-3-3zM6.800 3.200l3 3-6.300 6.300-3.300.4.300-3.400z" fill="#d9dbe0"/><path d="M4.200 6.600l4-4M5.500 8l4-4" stroke="#2e323e" stroke-width=".7"/></svg>
<div class="a" style="left:335.5px;top:264px;width:7.500px;height:16px;background:#3a4150;opacity:.8"></div>
<span class="a tl" style="left:40.5px;top:285.4px">b</span>
<span class="a td" style="left:51.7px;top:285.4px">1</span>
<div class="a" style="left:14px;top:317px;width:1px;height:97px;background:#363c4a"></div>
<span class="a mono vn" style="left:31.5px;top:307.8px">angular_velocity: <span class="vnum">0</span></span>
<svg style="left:19.8px;top:329.8px" width="6" height="9" viewBox="0 0 6 9" fill="none" stroke="#5b7c9e" stroke-width="1.100"><path d="M.8 .7l3.800 3.800L.8 8.300"/></svg><span class="a mono vn" style="left:31.5px;top:325.4px">linear_velocity: <span class="vval">Vector2(0, 0)</span></span>
<svg style="left:19.8px;top:347.5px" width="6" height="9" viewBox="0 0 6 9" fill="none" stroke="#5b7c9e" stroke-width="1.100"><path d="M.8 .7l3.800 3.800L.8 8.300"/></svg><span class="a mono vn" style="left:31.5px;top:343.1px">agent: <span class="vval">Reference</span></span>
<span class="a mono vn" style="left:31.5px;top:360.8px">angular_acceleration_max: <span class="vnum">3600</span></span>
<span class="a mono vn" style="left:31.5px;top:378.5px">angular_speed_max: <span class="vnum">200</span></span>
<span class="a mono vn" style="left:31.5px;top:396.2px">linear_speed_max: <span class="vnum">540</span></span>
<div class="a" style="left:120.3px;top:432.8px;width:77.500px;height:15.200px;border-radius:2px;background:#2b4664"></div>
<svg style="left:13.7px;top:435.9px" width="6" height="9" viewBox="0 0 6 9" fill="none" stroke="#5b7c9e" stroke-width="1.100"><path d="M.8 .7l3.800 3.800L.8 8.300"/></svg><span class="a mono wn" style="left:25.4px;top:431.5px">linear_velocity: <span class="vval">Vector2(0, 0)</span></span>
<span class="a mono" style="left:24.8px;top:546.2px;color:#eceef1">physics_process</span><span class="a tl" style="left:130.4px;top:546.2px;color:#eceef1;letter-spacing:0.109px/*fit*/">res://src/Ships/Player/States/Move.gd</span><span class="a bdg" style="left:312.5px;top:548.6px;background:#ffffff;color:#3b4252">42:1</span>
<span class="a mono" style="left:24.8px;top:563.9px;color:#687185">physics_process</span><span class="a tl" style="left:129.8px;top:563.9px;color:#8c94a3;letter-spacing:0.042px/*fit*/">res://src/Ships/Player/States/Travel.gd</span><span class="a bdg" style="left:312.5px;top:566.3px;background:#383d49;color:#8c94a3">23:1</span>
<span class="a mono" style="left:24.8px;top:581.6px;color:#687185">_physics_process</span><span class="a tl" style="left:125.5px;top:581.6px;color:#8c94a3;letter-spacing:0.059px/*fit*/">res://src/Libraries/StateMachine/StateMac...</span>
<div class="a" style="left:7px;top:666.5px;width:6.600px;height:6.600px;border-radius:50%;background:#e51400"></div>
<svg style="left:20.8px;top:664.8px" width="10" height="10" viewBox="0 0 10 10"><rect x=".3" y=".3" width="9.400" height="9.400" rx="1" fill="#f4f4f4" stroke="#8b8f99" stroke-width=".6"/><path d="M2.200 5.200l2 2 3.700-4.400" fill="none" stroke="#111" stroke-width="1.500"/></svg>
<span class="a tl" style="left:34px;top:660.9px;letter-spacing:0.189px/*fit*/">Move.gd</span>
<span class="a td" style="left:82px;top:661.4px;font-size:9px;color:#596174;letter-spacing:0.054px/*fit*/">src\Ships\Player\States</span>
<span class="a bdg" style="left:312.5px;top:663.3px;background:#383d49;color:#8c94a3">41:1</span>
<div class="a hd" style="left:0;top:28.4px"><svg style="left:3.500px;top:6px" width="9.500" height="6.300" viewBox="0 0 9 6" fill="none" stroke="#ffcc66" stroke-width="1.300"><path d="M.6 .8l3.900 3.900L8.400 .8"/></svg><span class="a ht" style="left:16.500px;letter-spacing:-0.321px/*fit*/">ACTIVE SCENE TREE</span></div>
<div class="a hd" style="left:0;top:184.7px"><svg style="left:3.500px;top:6px" width="9.500" height="6.300" viewBox="0 0 9 6" fill="none" stroke="#ffcc66" stroke-width="1.300"><path d="M.6 .8l3.900 3.900L8.400 .8"/></svg><span class="a ht" style="left:16.500px;letter-spacing:-0.082px/*fit*/">INSPECTOR</span><svg style="left:326px;top:3.800px" width="11" height="11" viewBox="0 0 13 13" fill="none" stroke="#e4e6ea" stroke-width="1.600"><path d="M3.300 3.200A4.700 4.700 0 1 1 1.800 7"/><path d="M3.600 .3v3.300h3.300"/></svg></div>
<div class="a hd" style="left:0;top:299.3px"><svg style="left:3.500px;top:6px" width="9.500" height="6.300" viewBox="0 0 9 6" fill="none" stroke="#ffcc66" stroke-width="1.300"><path d="M.6 .8l3.900 3.900L8.400 .8"/></svg><span class="a ht" style="left:16.500px;letter-spacing:-0.144px/*fit*/">VARIABLES</span></div>
<div class="a hd" style="left:0;top:413.6px"><svg style="left:3.500px;top:6px" width="9.500" height="6.300" viewBox="0 0 9 6" fill="none" stroke="#ffcc66" stroke-width="1.300"><path d="M.6 .8l3.900 3.900L8.400 .8"/></svg><span class="a ht" style="left:16.500px;letter-spacing:0.274px/*fit*/">WATCH</span></div>
<div class="a hd" style="left:0;top:528.4px"><svg style="left:3.500px;top:6px" width="9.500" height="6.300" viewBox="0 0 9 6" fill="none" stroke="#ffcc66" stroke-width="1.300"><path d="M.6 .8l3.900 3.900L8.400 .8"/></svg><span class="a ht" style="left:16.500px;letter-spacing:-0.302px/*fit*/">CALL STACK</span><span class="a" style="left:245.800px;top:0;line-height:20.300px;font-size:7.200px;font-weight:bold;color:#ffcc66;letter-spacing:-0.196px/*fit*/">PAUSED ON BREAKPOINT</span></div>
<div class="a hd" style="left:0;top:642.8px"><svg style="left:3.500px;top:6px" width="9.500" height="6.300" viewBox="0 0 9 6" fill="none" stroke="#ffcc66" stroke-width="1.300"><path d="M.6 .8l3.900 3.900L8.400 .8"/></svg><span class="a ht" style="left:16.500px;letter-spacing:-0.089px/*fit*/">BREAKPOINTS</span></div>
</div>
<div id="act" class="a">
<svg style="left:0;top:0" width="39" height="679" viewBox="0 0 39 679" fill="none" stroke="#414b5d" stroke-width="1.200" stroke-linejoin="round" stroke-linecap="round">
<path d="M18.300 10H25.200L29 13.800V22.400q0 1.500-1.500 1.500H18.300q-1.500 0-1.500-1.500V11.500q0-1.500 1.500-1.500zM25.200 10v3.800H29M16.800 15H12.900q-1.500 0-1.500 1.500V27.400q0 1.500 1.500 1.500H22.200q1.500 0 1.500-1.500V23.900"/>
<circle cx="23.100" cy="57.800" r="6.400"/><path d="M18.500 62.500L12 70.600"/>
<circle cx="16" cy="96.800" r="2.400"/><circle cx="24.800" cy="99.900" r="2.400"/><circle cx="15.900" cy="109.800" r="2.400"/><path d="M16 99.200v8.200M24.800 102.300c0 3.500-8.800 2-8.800 5"/>
<g stroke="#6c8bad" stroke-width="1.100"><path d="M17.500 142.500v-6.100l12.100 7.800-5.500 3.500"/><ellipse cx="15.200" cy="150.600" rx="2.700" ry="3.600"/><path d="M13.200 147.600a2 2 0 0 1 4 0M10.300 147.300l2.300 1.500M10 150.800h2.500M10.500 154.500l2.200-1.600M20.100 147.300l-2.300 1.500M20.400 150.800h-2.500M19.900 154.500l-2.200-1.600"/></g>
<path d="M11 181.900h7.400v7.200h7.500v7.200H11zM18.400 189.100H11M18.400 189.100v7.200"/><rect x="22.300" y="177.700" width="8.100" height="7.300" rx=".8"/>
<path d="M20.500 234.600H12.400q-1 0-1-1V222.600q0-1 1-1H28.100q1 0 1 1v6.500M15 237.300h5"/><circle cx="25.300" cy="234" r="4.700"/><path d="M23.300 232.600l1.300 1.400-1.300 1.400M27.300 232.600L26 234l1.300 1.400" stroke-width=".8"/>
<circle cx="20.500" cy="270.700" r="9.500"/><g fill="#414b5d"><circle cx="18.700" cy="265.800" r="1.500"/><circle cx="18.700" cy="275.600" r="1.500"/><circle cx="24" cy="270.700" r="1.500"/></g><path d="M18.700 265.800v9.800M18.700 266.500L24 270.700"/>
<g transform="translate(20.700 655.300) scale(.87)"><circle cx="0" cy="0" r="3.200"/><path d="M-1.700-10.500h3.400l.6 3 2 .9 2.600-1.700 2.400 2.400-1.700 2.600.9 2 3 .6v3.400l-3 .6-.9 2 1.700 2.600-2.400 2.400-2.600-1.700-2 .9-.6 3h-3.400l-.6-3-2-.9-2.600 1.700-2.400-2.400 1.700-2.600-.9-2-3-.6v-3.400l3-.6.9-2-1.700-2.600 2.400-2.400 2.600 1.700 2-.9z"/></g>
</svg>
<div class="a bb" style="left:19.400px;top:103px">10</div>
<div class="a bb" style="left:19.600px;top:144.700px">1</div>
<div class="a" style="left:37.500px;top:126px;width:1.500px;height:38px;background:#6f7f95"></div>
</div>
<div class="a" style="left:915px;top:24px;width:1px;height:679px;background:#15181f"></div>
<div id="status" class="a">
<div class="a" style="left:0;top:0;width:27px;height:17px;background:#ffcc66"></div>
<svg style="left:9.500px;top:3.500px" width="9" height="10" viewBox="0 0 9 10" fill="none" stroke="#8a6d2c" stroke-width="1.100"><path d="M1 3.500l3.200 3-3.200 3M8 .5L4.800 3.500l3.200 3"/></svg>
<svg style="left:34px;top:3.500px" width="9" height="11" viewBox="0 0 9 11" fill="none" stroke="#8ba0bb" stroke-width="1"><circle cx="2" cy="2" r="1.300"/><circle cx="2" cy="9" r="1.300"/><circle cx="7" cy="3.500" r="1.300"/><path d="M2 3.300v4.400M7 4.800c0 2-5 1.500-5 3"/></svg>
<span class="a st" style="left:47.800px;letter-spacing:0.113px/*fit*/">master*</span>
<svg style="left:94px;top:4px" width="11" height="10" viewBox="0 0 11 10" fill="none" stroke="#8ba0bb" stroke-width="1"><path d="M1.300 4.500a4.200 3.800 0 0 1 8-1.300M9.700 5.500a4.200 3.800 0 0 1-8 1.300"/><path d="M9.600 .8v2.600H7M1.400 9.200V6.600H4"/></svg>
<svg style="left:118px;top:3.800px" width="10" height="10" viewBox="0 0 10 10" fill="none" stroke="#8ba0bb" stroke-width="1"><circle cx="5" cy="5" r="4.300"/><path d="M3.200 3.200l3.600 3.600M6.800 3.200L3.200 6.800"/></svg>
<span class="a st" style="left:132px">0</span>
<svg style="left:141px;top:3.800px" width="10" height="10" viewBox="0 0 10 10" fill="none" stroke="#8ba0bb" stroke-width="1"><path d="M5 .9l4.400 8.300H.6z" stroke-linejoin="round"/><path d="M5 3.800v3M5 7.500v.8"/></svg>
<span class="a st" style="left:154px">0</span>
<svg style="left:174px;top:4.200px" width="7" height="9" viewBox="0 0 7 9" fill="none" stroke="#8ba0bb" stroke-width="1" stroke-linejoin="round"><path d="M.7 .8l5.600 3.700L.7 8.200z"/></svg>
<span class="a st" style="left:186px;letter-spacing:0.165px/*fit*/">Godot (project)</span>
<svg style="left:265px;top:3.500px" width="10" height="10" viewBox="0 0 10 10" fill="none" stroke="#8ba0bb"><circle cx="5" cy="5" r="3.300" stroke-width="1.800" stroke-dasharray="1.500 1.100"/><circle cx="5" cy="5" r="2.400" stroke-width="1"/><circle cx="5" cy="5" r=".9" stroke-width=".8"/></svg>
<span class="a st" style="left:278px;letter-spacing:0.163px/*fit*/">gdscript |</span>
<svg style="left:321px;top:5px" width="9" height="7" viewBox="0 0 9 7" fill="none" stroke="#8ba0bb" stroke-width="1"><path d="M.5 3.800l2.500 2.500L8.500 .6"/></svg>
<span class="a st" style="left:334.500px;letter-spacing:0.219px/*fit*/">Move.gd</span>
<svg style="left:819.500px;top:3px" width="6" height="11" viewBox="0 0 6 11" fill="none" stroke="#8ba0bb" stroke-width="1"><circle cx="3" cy="5" r="2"/><path d="M3 0v3M3 7v4"/></svg>
<span class="a st" style="left:830px;letter-spacing:0.068px/*fit*/">You, 2 months ago</span>
<span class="a st" style="left:922px;letter-spacing:-0.080px/*fit*/">Ln 42, Col 1</span>
<span class="a st" style="left:984.700px;letter-spacing:-0.217px/*fit*/">Tab Size: 4</span>
<span class="a st" style="left:1041.400px;letter-spacing:-0.192px/*fit*/">UTF-8</span>
<span class="a st" style="left:1079.700px;letter-spacing:-0.671px/*fit*/">CRLF</span>
<span class="a st" style="left:1114.200px;letter-spacing:-0.066px/*fit*/">GDScript</span>
<svg style="left:1166.700px;top:5.500px" width="7" height="7" viewBox="0 0 7 7" fill="none" stroke="#8ba0bb" stroke-width="1"><path d="M.5 .5l6 6M6.500 .5l-6 6"/></svg>
<span class="a st" style="left:1179.300px;letter-spacing:-0.043px/*fit*/">Disconnected</span>
<svg style="left:1248.500px;top:3.500px" width="11" height="10" viewBox="0 0 11 10" fill="none" stroke="#8ba0bb" stroke-width="1"><path d="M4.500 1h6v4.500H8.200L7 6.800V5.500"/><circle cx="3" cy="5" r="1.600"/><path d="M.5 9.500c0-3 5-3 5 0"/></svg>
<svg style="left:1274.500px;top:3.500px" width="9" height="11" viewBox="0 0 9 11" fill="none" stroke="#8ba0bb" stroke-width="1"><path d="M1 8V5a3.500 3.500 0 0 1 7 0v3l.7 .8H.3zM3.500 10h2"/></svg>
</div>
<div class="a" style="left:0;top:0;width:1297px;height:1px;background:#30343c"></div><div class="a" style="left:0;top:0;width:1px;height:703px;background:#252932"></div><div class="a" style="left:1296px;top:0;width:1px;height:720px;background:#2a2e38"></div>
</body>
</html>
